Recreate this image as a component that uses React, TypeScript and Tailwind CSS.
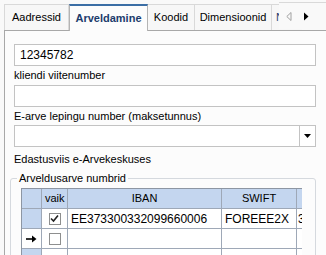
import React from "react";

const font = { fontFamily: '"Liberation Sans", Arial, sans-serif' };

function Tab({ label, w, active }: { label: string; w: number; active?: boolean }) {
  if (active) {
    return (
      <div
        className="relative z-10 -mb-px flex h-[27px] items-center justify-center border-x border-t-2 border-x-[#b4b4b4] border-t-[#3b6ea5] bg-[#fcfcfc] text-[11px] font-bold text-[#1c3c6c]"
        style={{ width: w }}
      >
        {label}
      </div>
    );
  }
  return (
    <div
      className="flex h-[26px] items-center justify-center border-t border-r border-[#d9d9d9] bg-[#f7f7f7] text-[11px] text-black"
      style={{ width: w }}
    >
      {label}
    </div>
  );
}

function Input({ value }: { value?: string }) {
  return (
    <div className="flex h-[22px] w-[302px] items-center border border-[#c3c3c3] bg-white pl-[5px] text-[12px] text-black">
      {value}
    </div>
  );
}

function Label({ text, cls }: { text: string; cls: string }) {
  return <div className={`text-[11px] leading-[13px] text-black ${cls}`}>{text}</div>;
}

function Check({ checked }: { checked?: boolean }) {
  return (
    <div className="flex h-[12px] w-[12px] items-center justify-center border border-[#8e8f8f] bg-white">
      {checked && (
        <svg width="9" height="9" viewBox="0 0 9 9">
          <path d="M1 4.5 L3.5 7 L8 1.5" fill="none" stroke="#222" strokeWidth="1.6" />
        </svg>
      )}
    </div>
  );
}

export default function App() {
  const cols = "grid-cols-[20px_26px_154px_75px_6px]";
  return (
    <div className="h-[255px] w-[326px] overflow-hidden bg-[#f9f9f9]" style={font}>
      {/* tab strip */}
      <div className="relative flex h-[30px] items-end pl-[4px]">
        <div className="flex h-[26px] w-[65px] items-center justify-center border-x border-t border-[#d9d9d9] bg-[#f7f7f7] text-[11px] text-black">
          Aadressid
        </div>
        <Tab label="Arveldamine" w={79} active />
        <Tab label="Koodid" w={47} />
        <Tab label="Dimensioonid" w={77} />
        <div className="flex h-[26px] w-[30px] items-center border-t border-[#d9d9d9] bg-[#f7f7f7] pl-[4px] text-[11px] text-[#1c3c6c]">
          N
        </div>
        <div className="absolute right-0 top-[2px] flex h-[27px] w-[47px] items-center gap-[11px] border-t border-[#d9d9d9] bg-[#f9f9f9] pl-[7px]">
          <svg width="6" height="9" viewBox="0 0 6 9">
            <path d="M5 0.5 L0.8 4.5 L5 8.5 Z" fill="none" stroke="#a0a0a0" strokeWidth="1" />
          </svg>
          <svg width="6" height="9" viewBox="0 0 6 9">
            <path d="M1 0.5 L5.5 4.5 L1 8.5 Z" fill="#000" />
          </svg>
        </div>
      </div>
      {/* panel */}
      <div className="ml-[4px] h-[226px] border-l border-t border-[#a8a8a8] bg-[#fcfcfc] pl-[9px] pt-[13px]">
        <Input value="12345782" />
        <Label text="kliendi viitenumber" cls="h-[19px] pt-[3px]" />
        <Input />
        <Label text="E-arve lepingu number (maksetunnus)" cls="h-[18px] pt-[3px]" />
        <div className="flex h-[22px] w-[302px] border border-[#c3c3c3] bg-white">
          <div className="flex-1" />
          <div className="flex w-[16px] items-center justify-center border-l border-[#c3c3c3]">
            <svg width="7" height="4" viewBox="0 0 7 4">
              <path d="M0 0 H7 L3.5 4 Z" fill="#000" />
            </svg>
          </div>
        </div>
        <Label text="Edastusviis e-Arvekeskuses" cls="h-[25px] pt-[6px]" />
        {/* groupbox */}
        <div className="relative -ml-[4px] mt-[6px] h-[90px] w-[306px] rounded-[3px] border border-[#d5d9de] pl-[10px] pt-[9px]">
          <div className="absolute -top-[7px] left-[6px] bg-[#fcfcfc] px-[2px] text-[11px] leading-[13px] text-black">
            Arveldusarve numbrid
          </div>
          <div className="w-[281px] overflow-hidden border-t border-l border-[#8d96a3] bg-[#aaaaaa]">
            <div className={`grid ${cols} h-[20px] bg-[#c4d6ef] text-[11px] text-black`}>
              <div className="border-r border-b border-[#9ea8b7]" />
              <div className="flex items-center overflow-hidden whitespace-nowrap border-r border-b border-[#9ea8b7] pl-[3px]">vaik</div>
              <div className="flex items-center justify-center border-r border-b border-[#9ea8b7]">IBAN</div>
              <div className="flex items-center justify-center border-r border-b border-[#9ea8b7]">SWIFT</div>
              <div className="border-b border-[#9ea8b7]" />
            </div>
            <div className={`grid ${cols} h-[20px] bg-white text-[12px] text-black`}>
              <div className="border-r border-b border-[#9ea8b7] bg-[#c4d6ef]" />
              <div className="flex items-center justify-center border-r border-b border-[#9ea8b7]"><Check checked /></div>
              <div className="flex items-center overflow-hidden whitespace-nowrap border-r border-b border-[#9ea8b7] pl-[3px]">EE373300332099660006</div>
              <div className="flex items-center overflow-hidden whitespace-nowrap border-r border-b border-[#9ea8b7] pl-[3px]">FOREEE2X</div>
              <div className="flex items-center overflow-hidden border-b border-[#9ea8b7] pl-[1px]">3</div>
            </div>
            <div className={`grid ${cols} h-[20px] bg-white text-[12px] text-black`}>
              <div className="flex items-center justify-center border-r border-b border-[#9ea8b7] bg-white">
                <svg width="11" height="8" viewBox="0 0 11 8">
                  <path d="M0 4 H8" stroke="#000" strokeWidth="1.6" />
                  <path d="M6 0.5 L10.5 4 L6 7.5 Z" fill="#000" />
                </svg>
              </div>
              <div className="flex items-center justify-center border-r border-b border-[#9ea8b7]"><Check /></div>
              <div className="border-r border-b border-[#9ea8b7]" />
              <div className="border-r border-b border-[#9ea8b7]" />
              <div className="border-b border-[#9ea8b7]" />
            </div>
            <div className={`grid ${cols} h-[20px] bg-white`}>
              <div className="border-r border-[#9ea8b7] bg-[#c4d6ef]" />
              <div className="border-r border-[#9ea8b7]" />
              <div className="border-r border-[#9ea8b7]" />
              <div className="border-r border-[#9ea8b7]" />
              <div />
            </div>
          </div>
        </div>
      </div>
    </div>
  );
}
